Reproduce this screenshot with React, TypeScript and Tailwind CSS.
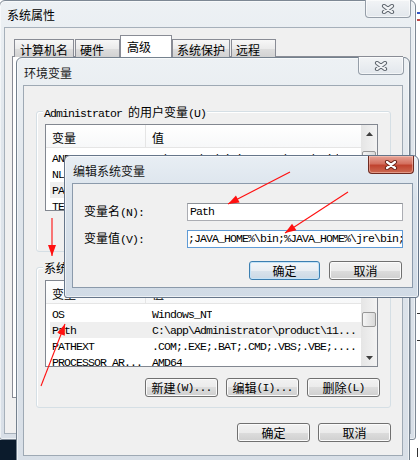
import type { ReactNode } from "react";

const mono = "font-['Liberation_Mono',monospace] text-[11.5px] tracking-[-0.9px]";

function M({ children }: { children: ReactNode }) {
  return <span className={mono}>{children}</span>;
}

function XGlyph({ active }: { active?: boolean }) {
  const d = "M3 2 L11 8 M11 2 L3 8";
  return (
    <svg width="14" height="10" viewBox="0 0 14 10">
      <path d={d} stroke={active ? "#6a2419" : "#5d646c"} strokeWidth="4.2" strokeLinecap="round" />
      <path d={d} stroke={active ? "#ffffff" : "#f1f3f5"} strokeWidth="2.2" strokeLinecap="round" />
    </svg>
  );
}

function CloseButton({ active }: { active?: boolean }) {
  if (active) {
    return (
      <div className="flex h-[18px] w-[46px] items-center justify-center rounded-b-[4px] border border-t-0 border-[#6e2b22] bg-[linear-gradient(180deg,#e6a396_0%,#d4705f_45%,#c0432f_55%,#cd6a52_100%)] shadow-[inset_0_0_0_1px_rgba(255,215,205,0.45)]">
        <XGlyph active />
      </div>
    );
  }
  return (
    <div className="flex h-[18px] w-[46px] items-center justify-center rounded-b-[4px] border border-t-0 border-[#959ea8] bg-[linear-gradient(180deg,#f2f4f6,#e2e7ec)] shadow-[inset_0_0_0_1px_rgba(255,255,255,0.6)]">
      <XGlyph />
    </div>
  );
}

function Btn({ children, className, def }: { children: ReactNode; className: string; def?: boolean }) {
  return (
    <div
      className={`flex h-[19px] shrink-0 items-center justify-center rounded-[3px] border ${
        def
          ? "border-[#3c7fb1] bg-[linear-gradient(180deg,#f3f6f9,#e9eef3_50%,#d9e3ec_50%,#ccd9e5)] shadow-[inset_0_0_0_1px_#c5e3f7]"
          : "border-[#707070] bg-[linear-gradient(180deg,#f2f2f2,#ebebeb_50%,#dddddd_50%,#cfcfcf)] shadow-[inset_0_0_0_1px_#fbfbfb]"
      } ${className}`}
    >
      {children}
    </div>
  );
}

function Tri({ up }: { up?: boolean }) {
  return (
    <svg width="7" height="4" viewBox="0 0 7 4">
      <polygon points={up ? "3.5,0 7,4 0,4" : "0,0 7,0 3.5,4"} fill="#3f3f3f" />
    </svg>
  );
}

type Row = [string, string];

function ListView({ rows, selected, thumbClass }: { rows: Row[]; selected: number; thumbClass: string }) {
  return (
    <div className="flex h-[87px] w-[333px] border border-[#828790] bg-white">
      <div className="flex min-w-0 flex-1 flex-col overflow-hidden">
        <div className="flex h-[23px] shrink-0 border-b border-[#e5e5e5] bg-[linear-gradient(180deg,#ffffff,#f7f8f9)]">
          <div className="flex w-[100px] items-center border-r border-[#e5e5e5] pl-[6px] pt-[3px]">变量</div>
          <div className="flex items-center pl-[6px] pt-[3px]">值</div>
        </div>
        <div className="pt-[2px]">
          {rows.map(([name, value], i) => (
            <div
              key={name}
              className={`ml-[4px] flex h-[16px] items-center whitespace-nowrap ${i === selected ? "bg-[#efefef]" : ""}`}
            >
              <div className="w-[96px] shrink-0 overflow-hidden pl-[2px]">
                <M>{name}</M>
              </div>
              <div className="overflow-hidden pl-[6px]">
                <M>{value}</M>
              </div>
            </div>
          ))}
        </div>
      </div>
      <div className="flex w-[16px] shrink-0 flex-col bg-[linear-gradient(90deg,#e5e5e5,#f3f3f3)]">
        <div className="flex h-[17px] shrink-0 items-center justify-center">
          <Tri up />
        </div>
        <div className="flex-1 px-[1px]">
          <div className={`h-[15px] rounded-[2px] border border-[#979797] bg-[linear-gradient(90deg,#f5f5f5,#d9d9d9)] ${thumbClass}`} />
        </div>
        <div className="flex h-[17px] shrink-0 items-center justify-center">
          <Tri />
        </div>
      </div>
    </div>
  );
}

function GroupBox({ label, children }: { label: ReactNode; children: ReactNode }) {
  return (
    <div className="relative ml-[12px] w-[355px] rounded-[3px] border border-[#d5dfe5] pb-[10px] pl-[8px] pr-[10px] pt-[12px] shadow-[inset_1px_1px_0_#ffffff]">
      <div className="absolute -top-[7px] left-[6px] whitespace-nowrap bg-[#f0f0f0] px-[1px] leading-[13px]">{label}</div>
      {children}
    </div>
  );
}

const userRows: Row[] = [
  ["ANDROID_SDK_HOME", "C:\\Users\\Administrator\\.android"],
  ["NLS_LANG", "SIMPLIFIED CHINESE_CHINA.ZHS16GBK"],
  ["PATH", "C:\\Program Files\\Java\\jdk1.8.0\\bin"],
  ["TEMP", "%USERPROFILE%\\AppData\\Local\\Temp"],
];

const sysRows: Row[] = [
  ["OS", "Windows_NT"],
  ["Path", "C:\\app\\Administrator\\product\\11..."],
  ["PATHEXT", ".COM;.EXE;.BAT;.CMD;.VBS;.VBE;...."],
  ["PROCESSOR_AR...", "AMD64"],
];

function head(x1: number, y1: number, x2: number, y2: number) {
  const dx = x2 - x1;
  const dy = y2 - y1;
  const d = Math.hypot(dx, dy);
  const ux = dx / d;
  const uy = dy / d;
  const bx = x2 - ux * 11;
  const by = y2 - uy * 11;
  return `${x2},${y2} ${bx - uy * 4},${by + ux * 4} ${bx + uy * 4},${by - ux * 4}`;
}

const arrows: [number, number, number, number][] = [
  [290, 172, 228, 204],
  [348, 192, 285, 233],
  [52, 218, 52, 256],
  [41, 386, 65, 324],
];

const frameInactive =
  "bg-[linear-gradient(180deg,#edf1f4_0%,#e0e6ec_30%,#d8dfe7_100%)] shadow-[inset_0_0_0_1px_rgba(255,255,255,0.55)]";

export default function App() {
  return (
    <div className="relative h-[460px] w-[420px] overflow-hidden bg-white font-['Noto_Sans_CJK_SC',sans-serif] text-[12px] leading-none text-black">
      {/* desktop corner + window behind on the right */}
      <div className="absolute left-0 top-[440px] h-[20px] w-[16px] bg-[#0b1b2c]" />
      <div className="absolute left-[417px] top-[12px] h-[2px] w-[3px] bg-[#3456c4]" />
      <div className="absolute left-[417px] top-[19px] h-[2px] w-[3px] bg-[#c44a4a]" />
      <div className="absolute left-[417px] top-[313px] h-[1px] w-[3px] bg-[#333]" />
      <div className="absolute left-[417px] top-[340px] h-[1px] w-[3px] bg-[#333]" />
      <div className="absolute left-[417px] top-[448px] h-[9px] w-[1px] bg-[#333]" />

      {/* 系统属性 */}
      <div className={`absolute -left-px top-0 flex h-[440px] w-[417px] flex-col rounded-t-[6px] rounded-b-[3px] border border-[#7d8894] px-[4px] pb-[5px] ${frameInactive}`}>
        <div className="flex h-[26px] shrink-0 items-start justify-between">
          <div className="pl-[3px] pt-[8px]">系统属性</div>
          <div className="-mt-px">
            <CloseButton />
          </div>
        </div>
        <div className="flex flex-1 flex-col border border-[#a6b0ba] bg-[#f0f0f0]">
          <div className="relative z-10 -mb-px flex items-end pl-[9px] pt-[7px]">
            <div className="flex h-[18px] w-[60px] items-center border border-b-0 border-[#898c95] bg-[linear-gradient(180deg,#f7f7f7,#ebebeb_50%,#dedede_50%,#d2d2d2)] pl-[5px] pt-[2px]">计算机名</div>
            <div className="ml-[1px] flex h-[18px] w-[45px] items-center border border-b-0 border-[#898c95] bg-[linear-gradient(180deg,#f7f7f7,#ebebeb_50%,#dedede_50%,#d2d2d2)] pl-[4px] pt-[2px]">硬件</div>
            <div className="flex h-[22px] w-[52px] items-center border border-b-0 border-[#898c95] bg-white pl-[6px]">高级</div>
            <div className="flex h-[18px] w-[58px] items-center border border-b-0 border-[#898c95] bg-[linear-gradient(180deg,#f7f7f7,#ebebeb_50%,#dedede_50%,#d2d2d2)] pl-[4px] pt-[2px]">系统保护</div>
            <div className="ml-[1px] flex h-[18px] w-[45px] items-center border border-b-0 border-[#898c95] bg-[linear-gradient(180deg,#f7f7f7,#ebebeb_50%,#dedede_50%,#d2d2d2)] pl-[4px] pt-[2px]">远程</div>
          </div>
          <div className="mx-[7px] h-[342px] border border-[#898c95] bg-white" />
        </div>
      </div>

      {/* 环境变量 */}
      <div className={`absolute left-[16px] top-[57px] flex h-[406px] w-[394px] flex-col rounded-t-[6px] border border-[#74818e] px-[6px] ${frameInactive}`}>
        <div className="flex h-[27px] shrink-0 items-start justify-between">
          <div className="pl-[1px] pt-[9px] text-[#1a1a1a]">环境变量</div>
          <div className="-mt-px -mr-px">
            <CloseButton />
          </div>
        </div>
        <div className="flex h-[371px] shrink-0 flex-col border border-[#9ea9b4] bg-[#f0f0f0]">
          <div className="mt-[25px]">
            <GroupBox
              label={
                <>
                  <M>Administrator </M>的用户变量<M>(U)</M>
                </>
              }
            >
              <ListView rows={userRows} selected={2} thumbClass="mt-[9px]" />
              <div className="mt-[11px] flex justify-end gap-[8px]">
                <Btn className="w-[73px]">新建<M>(N)...</M></Btn>
                <Btn className="w-[73px]">编辑<M>(E)...</M></Btn>
                <Btn className="w-[73px]">删除<M>(D)</M></Btn>
              </div>
            </GroupBox>
          </div>
          <div className="mt-[15px]">
            <GroupBox
              label={
                <>
                  系统变量<M>(S)</M>
                </>
              }
            >
              <ListView rows={sysRows} selected={1} thumbClass="mt-[14px]" />
              <div className="mt-[11px] flex justify-end gap-[8px]">
                <Btn className="w-[73px]">新建<M>(W)...</M></Btn>
                <Btn className="w-[73px]">编辑<M>(I)...</M></Btn>
                <Btn className="w-[73px]">删除<M>(L)</M></Btn>
              </div>
            </GroupBox>
          </div>
          <div className="mt-[15px] flex justify-end gap-[8px] pr-[11px]">
            <Btn className="w-[73px]">确定</Btn>
            <Btn className="w-[73px]">取消</Btn>
          </div>
        </div>
      </div>

      {/* 编辑系统变量 */}
      <div className="absolute left-[64px] top-[155px] flex h-[143px] w-[355px] flex-col rounded-t-[6px] rounded-b-[3px] border border-[#66768a] bg-[linear-gradient(180deg,#e8eef4_0%,#d9e2eb_30%,#d1dbe6_100%)] pb-[9px] pl-[7px] pr-[5px] shadow-[inset_0_0_0_1px_rgba(255,255,255,0.6)]">
        <div className="flex h-[27px] shrink-0 items-start justify-between">
          <div className="pl-[1px] pt-[9px] text-[#151515]">编辑系统变量</div>
          <div className="-mr-px">
            <CloseButton active />
          </div>
        </div>
        <div className="flex flex-1 flex-col border border-[#8b9aab] bg-[#f0f0f0]">
          <div className="mt-[19px] flex h-[18px] items-center pl-[11px]">
            <div className="w-[103px] shrink-0">
              变量名<M>(N):</M>
            </div>
            <div className="flex h-[18px] w-[216px] items-center overflow-hidden border border-[#abadb3] border-t-[#8e9298] bg-white pl-[2px]">
              <M>Path</M>
            </div>
          </div>
          <div className="mt-[9px] flex h-[18px] items-center pl-[11px]">
            <div className="w-[103px] shrink-0">
              变量值<M>(V):</M>
            </div>
            <div className="flex h-[18px] w-[216px] items-center overflow-hidden whitespace-nowrap border border-[#5f9bd6] bg-white">
              <M>;JAVA_HOME%\bin;%JAVA_HOME%\jre\bin;</M>
            </div>
          </div>
          <div className="mt-[13px] flex justify-end gap-[9px] pr-[10px]">
            <Btn def className="w-[71px]">确定</Btn>
            <Btn className="w-[73px]">取消</Btn>
          </div>
        </div>
      </div>

      {/* red annotation arrows */}
      <svg className="pointer-events-none absolute left-0 top-0" width="420" height="460" viewBox="0 0 420 460">
        {arrows.map(([x1, y1, x2, y2], i) => (
          <g key={i}>
            <line x1={x1} y1={y1} x2={x2} y2={y2} stroke="#ff1010" strokeWidth="1.1" />
            <polygon points={head(x1, y1, x2, y2)} fill="#ff1010" />
          </g>
        ))}
      </svg>
    </div>
  );
}
